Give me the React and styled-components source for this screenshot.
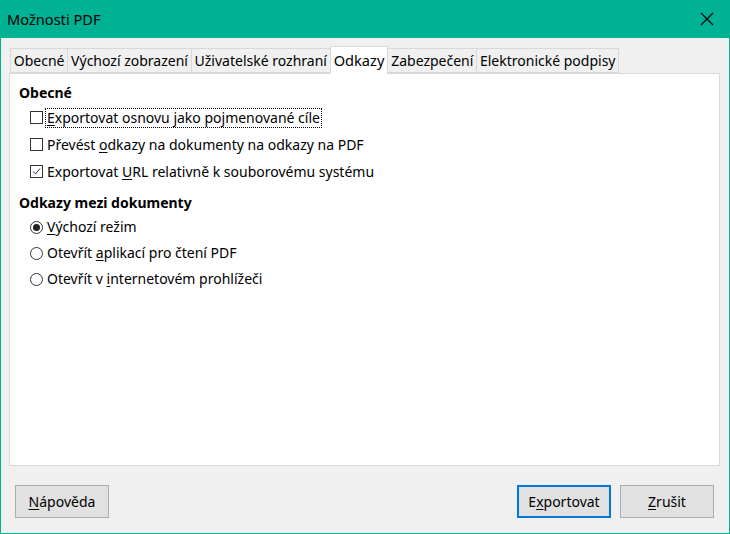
import React from "react";
import styled, { createGlobalStyle } from "styled-components";

const Global = createGlobalStyle`
  html, body { margin: 0; padding: 0; background: #f0f0f0; }
  body { font-family: "Noto Sans", "Open Sans", sans-serif; }
  * { box-sizing: border-box; }
`;

const Window = styled.div`
  width: 730px;
  height: 534px;
  display: flex;
  flex-direction: column;
  border: 1px solid #00b294;
  border-top: none;
  background: #f0f0f0;
  font-size: 14px;
  color: #000;
`;

const TitleBar = styled.div`
  height: 38px;
  flex: none;
  background: #00b294;
  display: flex;
  align-items: center;
  justify-content: space-between;
  padding: 0 0 0 7px;
  margin: 0 -1px;
  font-size: 14.6px;
`;

const CloseBtn = styled.div`
  width: 46px;
  height: 38px;
  display: flex;
  align-items: center;
  justify-content: center;
`;

const Body = styled.div`
  flex: 1;
  display: flex;
  flex-direction: column;
  padding: 8px 9px 0 8px;
`;

const TabStrip = styled.div`
  display: flex;
  align-items: flex-end;
  padding-left: 2px;
  height: 27px;
  position: relative;
  z-index: 1;
`;

const Tab = styled.div`
  height: ${(p) => (p.$active ? "28px" : "25px")};
  margin-bottom: ${(p) => (p.$active ? "-1px" : "0")};
  padding: 0 ${(p) => (p.$active ? "3px" : "2.8px")};
  display: flex;
  align-items: center;
  background: ${(p) => (p.$active ? "#fff" : "#f0f0f0")};
  border: 1px solid #d9d9d9;
  border-bottom: ${(p) => (p.$active ? "none" : "1px solid #d9d9d9")};
  margin-left: -1px;
  white-space: nowrap;
  font-size: ${(p) => (p.$active ? "14.6px" : "14px")};
  padding-bottom: ${(p) => (p.$active ? "2px" : "0")};
`;

const Panel = styled.div`
  height: 393px;
  background: #fff;
  border: 1px solid #d9d9d9;
  padding: 6px 0 0 9px;
  display: flex;
  flex-direction: column;
`;

const SectionTitle = styled.div`
  font-weight: bold;
  height: ${(p) => p.$h || 24}px;
  display: flex;
  align-items: center;
`;

const Options = styled.div`
  display: flex;
  flex-direction: column;
  padding-left: 11px;
  margin-bottom: ${(p) => p.$mb || 0}px;
`;

const Row = styled.label`
  height: ${(p) => p.$h || 27}px;
  display: flex;
  align-items: center;
  gap: 2px;
`;

const Box = styled.span`
  width: 13px;
  height: 13px;
  border: 1px solid #333;
  background: #fff;
  display: inline-flex;
  align-items: center;
  justify-content: center;
  flex: none;
`;

const Radio = styled.span`
  width: 13px;
  height: 13px;
  border-radius: 50%;
  border: 1px solid #333;
  background: #fff;
  display: inline-flex;
  align-items: center;
  justify-content: center;
  flex: none;
  &::after {
    content: "";
    width: 7px;
    height: 7px;
    border-radius: 50%;
    background: ${(p) => (p.$on ? "#222" : "transparent")};
  }
`;

const Label = styled.span`
  padding: 0 1px;
  border: 1px ${(p) => (p.$focus ? "dotted #000" : "solid transparent")};
  line-height: 18px;
`;

const U = styled.span`
  text-decoration: underline;
  text-underline-offset: 2px;
`;

const Footer = styled.div`
  flex: 1;
  display: flex;
  align-items: flex-start;
  justify-content: space-between;
  padding: 19px 6px 0 6px;
`;

const ButtonGroup = styled.div`
  display: flex;
  gap: 9px;
`;

const Button = styled.div`
  width: 94px;
  height: 33px;
  display: flex;
  align-items: center;
  justify-content: center;
  background: #e1e1e1;
  border: ${(p) => (p.$default ? "2px solid #0078d7" : "1px solid #adadad")};
`;

const Check = () => (
  <svg width="11" height="11" viewBox="0 0 11 11">
    <path d="M2 5.5 L4.5 8 L9 2.5" fill="none" stroke="#333" strokeWidth="1" />
  </svg>
);

export default function App() {
  return (
    <>
      <Global />
      <Window>
        <TitleBar>
          <span>Možnosti PDF</span>
          <CloseBtn>
            <svg width="14" height="14" viewBox="0 0 14 14">
              <path d="M1 1 L13 13 M13 1 L1 13" stroke="#000" strokeWidth="1.1" />
            </svg>
          </CloseBtn>
        </TitleBar>
        <Body>
          <TabStrip>
            <Tab>Obecné</Tab>
            <Tab>Výchozí zobrazení</Tab>
            <Tab>Uživatelské rozhraní</Tab>
            <Tab $active>Odkazy</Tab>
            <Tab>Zabezpečení</Tab>
            <Tab>Elektronické podpisy</Tab>
          </TabStrip>
          <Panel>
            <SectionTitle>Obecné</SectionTitle>
            <Options $mb={5}>
              <Row>
                <Box />
                <Label $focus>
                  <U>E</U>xportovat osnovu jako pojmenované cíle
                </Label>
              </Row>
              <Row>
                <Box />
                <Label>
                  Převést <U>o</U>dkazy na dokumenty na odkazy na PDF
                </Label>
              </Row>
              <Row>
                <Box>
                  <Check />
                </Box>
                <Label>
                  Exportovat <U>U</U>RL relativně k souborovému systému
                </Label>
              </Row>
            </Options>
            <SectionTitle>Odkazy mezi dokumenty</SectionTitle>
            <Options>
              <Row $h={26}>
                <Radio $on />
                <Label>
                  <U>V</U>ýchozí režim
                </Label>
              </Row>
              <Row $h={26}>
                <Radio />
                <Label>
                  Otevřít <U>a</U>plikací pro čtení PDF
                </Label>
              </Row>
              <Row $h={26}>
                <Radio />
                <Label>
                  Otevřít v <U>i</U>nternetovém prohlížeči
                </Label>
              </Row>
            </Options>
          </Panel>
          <Footer>
            <Button>
              <span>
                <U>N</U>ápověda
              </span>
            </Button>
            <ButtonGroup>
              <Button $default>
                <span>
                  E<U>x</U>portovat
                </span>
              </Button>
              <Button>
                <span>
                  <U>Z</U>rušit
                </span>
              </Button>
            </ButtonGroup>
          </Footer>
        </Body>
      </Window>
    </>
  );
}
